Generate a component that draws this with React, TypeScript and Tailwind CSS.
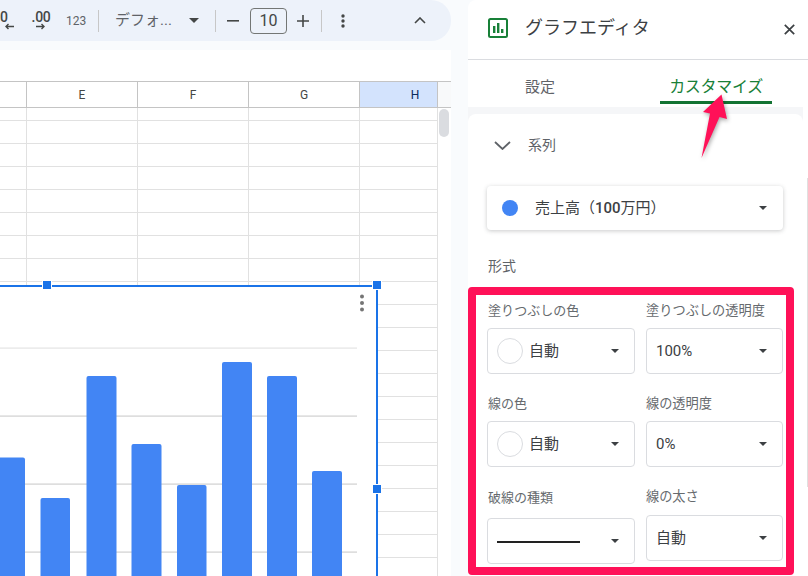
import React from "react";

const FONT = "[font-family:Roboto,'Noto_Sans_CJK_JP',sans-serif]";

function Caret({ className = "", w = 10 }: { className?: string; w?: number }) {
  return (
    <svg width={w} height={w / 2} viewBox="0 0 10 5" className={className}>
      <path d="M0 0h10L5 5z" fill="currentColor" />
    </svg>
  );
}

function Divider() {
  return <div className="w-px h-[22px] bg-[#c7c7c7]" />;
}

function Toolbar() {
  return (
    <div className="h-[41px] bg-[#edf2fa] rounded-r-[20px] flex items-center text-[#444746] overflow-hidden relative">
      <div className="w-[14px] mr-[17px] flex flex-col mt-[-2px]">
        <span className="text-[14px] leading-[14px] font-medium self-start">0</span>
        <svg width="10" height="7" viewBox="0 0 10 7" className="self-end mt-[-1px]">
          <path d="M10 3.5H2M4.5 1 2 3.5 4.5 6" fill="none" stroke="currentColor" strokeWidth="1.4" />
        </svg>
      </div>
      <div className="w-[20px] mr-[15px] flex flex-col items-center mt-[-2px]">
        <span className="text-[14px] leading-[14px] font-medium tracking-[-0.3px]">.00</span>
        <svg width="10" height="7" viewBox="0 0 10 7" className="mt-[-1px]">
          <path d="M0 3.5h8M5.5 1 8 3.5 5.5 6" fill="none" stroke="currentColor" strokeWidth="1.4" />
        </svg>
      </div>
      <span className="text-[12px] w-[20px] mr-[12px] text-[#5f6368]">123</span>
      <Divider />
      <span className="text-[15px] ml-[16px] w-[60px] whitespace-nowrap text-[#5f6368]">デフォ...</span>
      <Caret className="ml-[14px] text-[#444746]" />
      <div className="ml-[16px]"><Divider /></div>
      <svg width="12" height="2" viewBox="0 0 12 2" className="ml-[11px]">
        <rect width="12" height="1.6" fill="currentColor" />
      </svg>
      <div className="ml-[11px] w-[37px] h-[26px] border border-[#747775] rounded-[4px] flex items-center justify-center text-[16px]">10</div>
      <svg width="12" height="12" viewBox="0 0 12 12" className="ml-[10px]">
        <path d="M0 6h12M6 0v12" stroke="currentColor" strokeWidth="1.6" />
      </svg>
      <div className="ml-[12px]"><Divider /></div>
      <svg width="4" height="14" viewBox="0 0 4 14" className="ml-[19px]">
        <circle cx="2" cy="2" r="1.7" fill="currentColor" />
        <circle cx="2" cy="7" r="1.7" fill="currentColor" />
        <circle cx="2" cy="12" r="1.7" fill="currentColor" />
      </svg>
      <svg width="12" height="7" viewBox="0 0 12 7" className="ml-[69px]">
        <path d="M1 6l5-5 5 5" fill="none" stroke="currentColor" strokeWidth="1.6" />
      </svg>
    </div>
  );
}

function Sheet() {
  const rows = Array.from({ length: 22 });
  return (
    <div className="mt-[9px] bg-white flex-1 overflow-hidden">
      <div className="h-[31px]" />
      <div className="h-[27px] flex border-y border-[#c4c4c4] text-[12px] text-[#444746]">
        <div className="w-[27px] border-r border-[#c4c4c4]" />
        <div className="w-[111px] border-r border-[#c4c4c4] flex items-center justify-center">E</div>
        <div className="w-[111px] border-r border-[#c4c4c4] flex items-center justify-center">F</div>
        <div className="w-[111px] border-r border-[#c4c4c4] flex items-center justify-center">G</div>
        <div className="w-[78px] border-r border-[#c4c4c4] bg-[#d3e3fd] flex items-center justify-center pl-[33px] text-[#0b2a5c]">H</div>
        <div className="flex-1 bg-[#f8f9fa]" />
      </div>
      <div className="flex">
        <div className="w-[438px]">
          {rows.map((_, i) => (
            <div key={i} className={i === 0 ? "h-[13px] flex border-b border-[#e1e1e1]" : "h-[23px] flex border-b border-[#e1e1e1]"}>
              <div className="w-[27px] border-r border-[#e1e1e1]" />
              <div className="w-[111px] border-r border-[#e1e1e1]" />
              <div className="w-[111px] border-r border-[#e1e1e1]" />
              <div className="w-[111px] border-r border-[#e1e1e1]" />
              <div className="w-[78px] border-r border-[#e1e1e1]" />
            </div>
          ))}
        </div>
        <div className="flex-1 pl-[1px] pt-[1px]">
          <div className="w-[10px] h-[28px] rounded-full bg-[#dadce0]" />
        </div>
      </div>
    </div>
  );
}

const bars = [
  { x: -5, w: 30, top: 457.5 },
  { x: 40.5, w: 29.5, top: 498 },
  { x: 86.5, w: 30, top: 376 },
  { x: 131.5, w: 30, top: 444 },
  { x: 177, w: 29.5, top: 485 },
  { x: 222, w: 30, top: 362 },
  { x: 267, w: 30, top: 376 },
  { x: 312, w: 30, top: 471 },
];

function Chart() {
  return (
    <div className="absolute left-[-4px] top-[285px] w-[382px] h-[300px] bg-white border-2 border-[#1a73e8]">
      <svg width="378" height="296" viewBox="-2 287 378 296" className="block">
        {[348, 416, 484, 552].map((y) => (
          <rect key={y} x="-2" y={y - 0.5} width="359" height="1.2" fill={y === 348 ? "#e4e4e4" : "#d0d0d0"} />
        ))}
        {bars.map((b) => (
          <path
            key={b.x}
            d={`M${b.x} 600V${b.top + 2}q0-2 2-2h${b.w - 4}q2 0 2 2V600z`}
            fill="#4285f4"
          />
        ))}
        <circle cx="362" cy="296.5" r="2" fill="#757575" />
        <circle cx="362" cy="303" r="2" fill="#757575" />
        <circle cx="362" cy="309.5" r="2" fill="#757575" />
      </svg>
    </div>
  );
}

function Handle({ className }: { className: string }) {
  return <div className={`absolute w-[10px] h-[10px] bg-[#1a73e8] border border-white ${className}`} />;
}

function Select({ children, className = "" }: { children: React.ReactNode; className?: string }) {
  return (
    <div className={`h-[46px] border border-[#dadce0] rounded-[4px] flex items-center text-[15px] leading-[20px] text-[#3c4043] relative ${className}`}>
      {children}
      <Caret w={8} className="absolute right-[15px] text-[#3c4043]" />
    </div>
  );
}

function Swatch() {
  return <div className="w-[26px] h-[26px] rounded-full border border-[#dadce0] ml-[9px] mr-[6px]" />;
}

function Label({ children, className = "" }: { children: React.ReactNode; className?: string }) {
  return <div className={`h-[16px] leading-[16px] text-[#666a6e] whitespace-nowrap ${className}`}>{children}</div>;
}

function Panel() {
  return (
    <div className="w-[340px] ml-[17px] bg-white rounded-tl-lg flex flex-col overflow-hidden">
      <div className="h-[60px] border-b border-[#dadce0] flex items-center pl-[20px] pr-[13px] shrink-0">
        <svg width="20" height="20" viewBox="0 0 20 20" className="mb-[3px]">
          <rect x="1" y="1" width="18" height="18" rx="1.5" fill="none" stroke="#188038" strokeWidth="2" />
          <rect x="5" y="8" width="2.4" height="7" fill="#188038" />
          <rect x="9" y="5" width="2.4" height="10" fill="#188038" />
          <rect x="13" y="11" width="2.4" height="4" fill="#188038" />
        </svg>
        <span className="ml-[17px] text-[18px] text-[#3c4043] flex-1 mb-[5px]">グラフエディタ</span>
        <svg width="11" height="11" viewBox="0 0 11 11" className="mt-[-1px]">
          <path d="M.8.8l9.4 9.4M10.2.8.8 10.2" stroke="#3c4043" strokeWidth="1.7" />
        </svg>
      </div>
      <div className="h-[47px] shrink-0 flex">
        <div className="w-[112px] ml-[16px] h-[44px] pt-[16px] leading-[22px] text-center text-[15px] text-[#5f6368]">設定</div>
        <div className="w-[112px] ml-[64px] h-[44px] pt-[16px] leading-[22px] text-center text-[16px] text-[#188038] border-b-[3px] border-[#137333] whitespace-nowrap tracking-[-0.3px]">カスタマイズ</div>
      </div>
      <div className="w-[335px] flex-1 bg-[#f5f6f8] pt-[7px]">
        <div className="bg-white rounded-t-[8px] h-full px-[19px]">
          <div className="h-[62px] flex items-center">
            <svg width="17" height="9" viewBox="0 0 17 9" className="ml-[7px]">
              <path d="M1 1l7.5 7L16 1" fill="none" stroke="#5f6368" strokeWidth="1.8" />
            </svg>
            <span className="ml-[17px] text-[14px] text-[#5f6368] mt-[1px]">系列</span>
          </div>
          <div className="mt-[10px] w-[296px] h-[44px] rounded-[4px] bg-white shadow-[0_1px_4px_rgba(60,64,67,0.28)] flex items-center relative">
            <div className="w-[16px] h-[16px] rounded-full bg-[#4285f4] ml-[15px]" />
            <span className="ml-[17px] text-[15px] text-[#3c4043] whitespace-nowrap">
              売上高（<span className="font-medium">100</span>万円）
            </span>
            <Caret w={8} className="absolute right-[16px] text-[#3c4043]" />
          </div>
          <div className="mt-[28px] h-[16px] leading-[16px] text-[14px] text-[#5f6368] ml-[1px]">形式</div>
          <div className="mt-[29px] flex gap-[11px]">
            <div className="w-[148px] text-[13px]">
              <Label className="ml-[1px]">塗りつぶしの色</Label>
              <Select className="mt-[9px]"><Swatch />自動</Select>
              <Label className="mt-[22px] ml-[1px]">線の色</Label>
              <Select className="mt-[9px]"><Swatch />自動</Select>
              <Label className="mt-[23px] ml-[1px]">破線の種類</Label>
              <Select className="mt-[12px]">
                <div className="ml-[9px] w-[83px] h-[2px] bg-[#222] mt-[2px]" />
              </Select>
            </div>
            <div className="w-[137px] text-[13.2px]">
              <Label>塗りつぶしの透明度</Label>
              <Select className="mt-[9px] pl-[9px]">100%</Select>
              <Label className="mt-[22px]">線の透明度</Label>
              <Select className="mt-[9px] pl-[9px]">0%</Select>
              <Label className="mt-[22px]">線の太さ</Label>
              <Select className="mt-[10px] pl-[9px]">自動</Select>
            </div>
          </div>
        </div>
      </div>
    </div>
  );
}

export default function App() {
  return (
    <div className={`relative w-[808px] h-[576px] overflow-hidden bg-[#f9fbfd] flex ${FONT}`}>
      <div className="w-[451px] flex flex-col relative overflow-hidden">
        <Toolbar />
        <Sheet />
        <Chart />
        <Handle className="left-[42px] top-[280px]" />
        <Handle className="left-[372px] top-[280px]" />
        <Handle className="left-[372px] top-[484px]" />
      </div>
      <Panel />
      <div className="absolute left-[468px] top-[287px] w-[326px] h-[288px] border-[8px] border-[#ff1158] rounded-[4px]" />
      <div className="absolute left-[807px] top-[178px] w-px h-[309px] bg-[#e0e0e0]" />
      <svg width="40" height="76" viewBox="695 90 40 76" className="absolute left-[695px] top-[90px] drop-shadow-[1px_2px_2px_rgba(0,0,0,0.35)]">
        <polygon points="721.5,94.5 727,119 719.5,117 701.5,158 710,113.5 703,112" fill="#ff1158" />
      </svg>
    </div>
  );
}
